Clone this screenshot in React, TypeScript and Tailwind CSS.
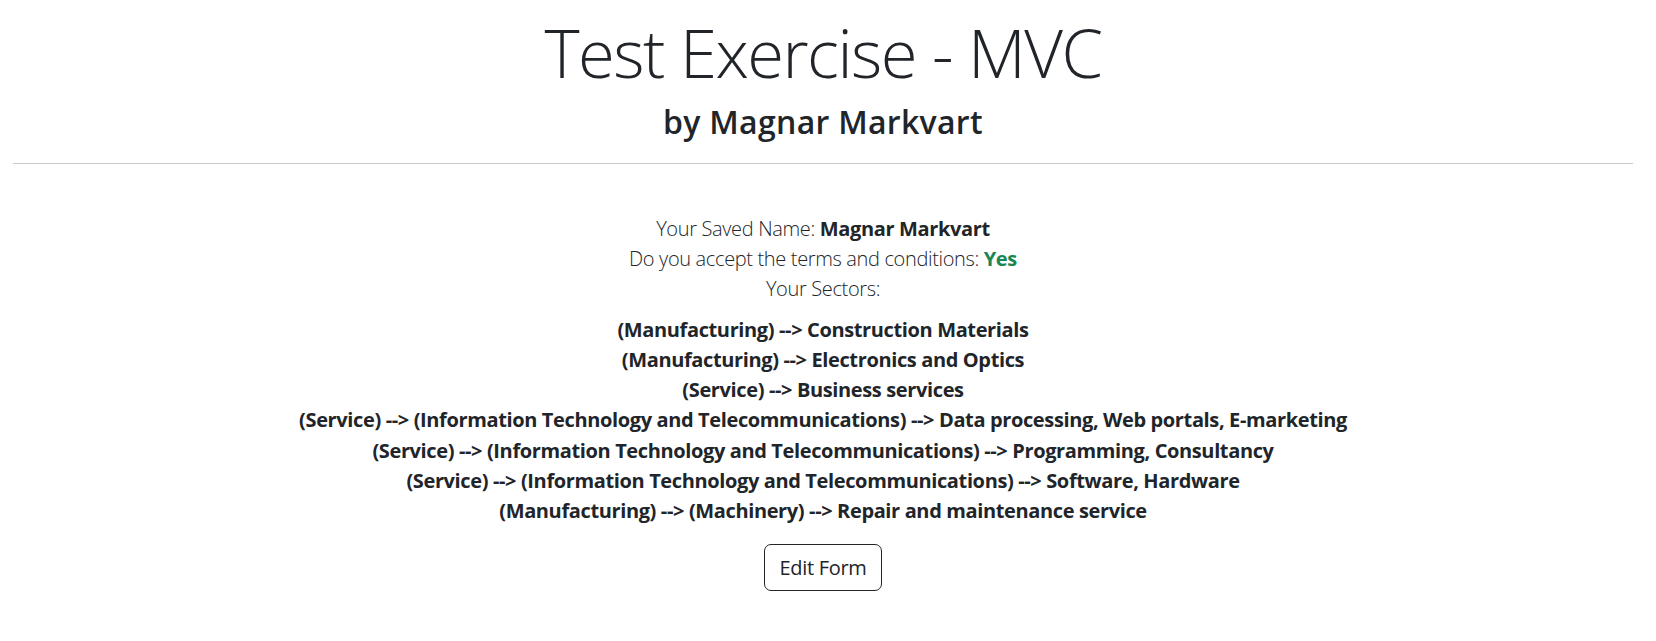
import React from 'react';

const sectors = [
  '(Manufacturing) --> Construction Materials',
  '(Manufacturing) --> Electronics and Optics',
  '(Service) --> Business services',
  '(Service) --> (Information Technology and Telecommunications) --> Data processing, Web portals, E-marketing',
  '(Service) --> (Information Technology and Telecommunications) --> Programming, Consultancy',
  '(Service) --> (Information Technology and Telecommunications) --> Software, Hardware',
  '(Manufacturing) --> (Machinery) --> Repair and maintenance service',
];

export default function App() {
  return (
    <div className="min-h-screen bg-white pl-[13px] pr-[23px] text-[#212529] font-['Open_Sans',sans-serif]">
      <div className="text-center">
        <h1 className="pt-[12px] text-[67px] font-light leading-[1.2] tracking-[-1.5px]">Test Exercise - MVC</h1>
        <h2 className="mt-[11px] text-[32px] font-semibold leading-[1.2] tracking-[0.3px]">by Magnar Markvart</h2>
        <hr className="mt-[21px] border-0 border-t border-[#c8c9ca]" />

        <div className="mt-[50px] text-[20px] font-light leading-[30px] tracking-[-0.35px]">
          <p>
            Your Saved Name: <span className="font-bold">Magnar Markvart</span>
          </p>
          <p>
            Do you accept the terms and conditions: <span className="font-bold text-[#198754]">Yes</span>
          </p>
          <p>Your Sectors:</p>

          <ul className="mt-[11px] font-bold leading-[30.2px] tracking-[-0.37px]">
            {sectors.map((s) => (
              <li key={s}>{s}</li>
            ))}
          </ul>

          <button className="mt-[18px] h-[47px] rounded-[7px] border border-[#212529] px-[14px] text-[20px] font-normal leading-[30px] tracking-[-0.3px] text-[#212529]">
            Edit Form
          </button>
        </div>
      </div>
    </div>
  );
}
